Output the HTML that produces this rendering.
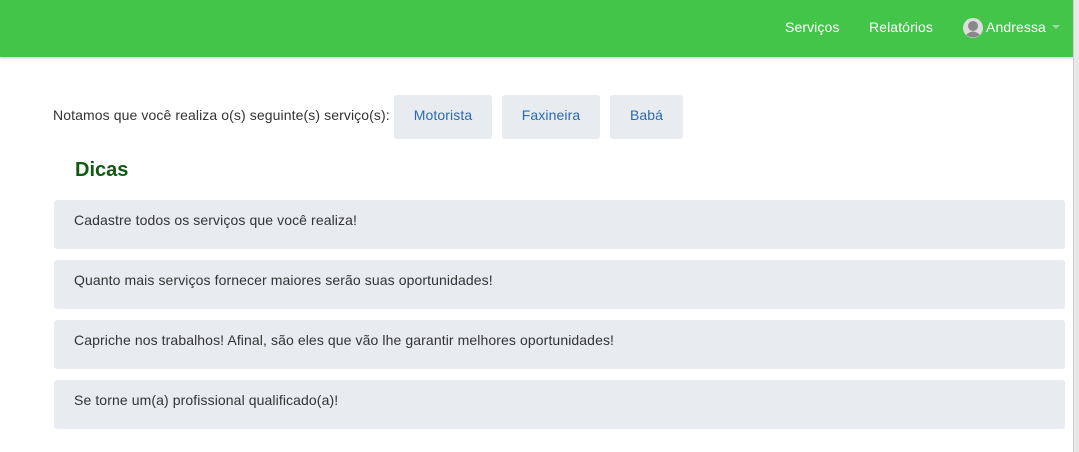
<!DOCTYPE html>
<html><head><meta charset="utf-8"><style>
body{margin:0;width:1079px;height:452px;background:#fff;font-family:"Liberation Sans",sans-serif;font-size:14px;color:#333;position:relative;overflow:hidden;letter-spacing:0.1px}
.nav{position:absolute;left:0;top:0;width:1074px;height:57px;background:#43c54a;box-shadow:0 1px 3px rgba(0,0,0,.2)}
.nav span{position:absolute;top:19px;color:#fff;font-size:14px}
.sb{position:absolute;right:0;top:0;width:5px;height:452px;background:#e8e8e8;border-left:1px solid #ccc}
.t{position:absolute;left:53px;top:107px}
.b{position:absolute;top:95px;height:44px;background:#e8ecf0;border-radius:3px;color:#2a6ab0;text-align:center;line-height:41px}
h2{position:absolute;left:75px;top:159px;margin:0;font-size:20px;color:#0e5a12;font-weight:bold;letter-spacing:0}
.d{position:absolute;left:54px;width:1011px;height:49px;background:#e8ecf0;border-radius:3px}
.d span{position:absolute;left:20px;top:12px}
</style></head><body>
<div class="nav">
<span style="left:785px">Serviços</span>
<span style="left:869px">Relatórios</span>
<svg style="position:absolute;left:963px;top:18px" width="20" height="20" viewBox="0 0 20 20"><circle cx="10" cy="10" r="10" fill="#ddd"/><circle cx="10" cy="8" r="5" fill="#888"/><path d="M3 17 Q10 10 17 17 Q10 22 3 17Z" fill="#888"/></svg>
<span style="left:986px">Andressa</span>
<svg style="position:absolute;left:1052px;top:25px" width="8" height="5"><path d="M0 0H8L4 4Z" fill="#9ed9a2"/></svg>
</div>
<div class="sb"></div>
<div class="t">Notamos que você realiza o(s) seguinte(s) serviço(s):</div>
<div class="b" style="left:394px;width:98px">Motorista</div>
<div class="b" style="left:502px;width:98px">Faxineira</div>
<div class="b" style="left:610px;width:73px">Babá</div>
<h2>Dicas</h2>
<div class="d" style="top:200px"><span>Cadastre todos os serviços que você realiza!</span></div>
<div class="d" style="top:260px"><span>Quanto mais serviços fornecer maiores serão suas oportunidades!</span></div>
<div class="d" style="top:320px"><span>Capriche nos trabalhos! Afinal, são eles que vão lhe garantir melhores oportunidades!</span></div>
<div class="d" style="top:380px"><span>Se torne um(a) profissional qualificado(a)!</span></div>
</body></html>
